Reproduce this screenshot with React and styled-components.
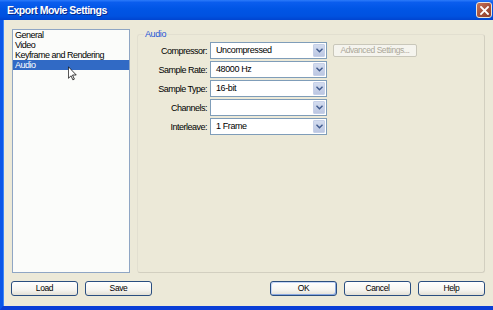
import React from 'react';
import styled, { createGlobalStyle } from 'styled-components';

const Global = createGlobalStyle`
  html, body { margin: 0; padding: 0; background: #ECE9D8; }
  body {
    width: 493px; height: 310px; overflow: hidden;
    font-family: "Liberation Sans", Arial, sans-serif;
  }
  * { box-sizing: border-box; }
`;

const Window = styled.div`
  width: 493px;
  height: 310px;
  display: flex;
  flex-direction: column;
`;

const TitleBar = styled.div`
  height: 20px;
  flex: none;
  display: flex;
  align-items: center;
  justify-content: space-between;
  padding: 0 1px 0 7px;
  background: linear-gradient(#2C7BFA 0%, #0A5DEE 12%, #0055E5 45%, #0052E0 80%, #0044D0 100%);
`;

const Title = styled.div`
  color: #fff;
  font-weight: bold;
  font-size: 10.5px;
  letter-spacing: -0.5px;
  text-shadow: 1px 1px 0 #0A2B8C;
`;

const CloseButton = styled.div`
  width: 16px;
  height: 16px;
  border: 1px solid #E8E4DC;
  border-radius: 3px;
  background: linear-gradient(135deg, #C87458 0%, #A5503A 55%, #8C3F2C 100%);
  display: flex;
  align-items: center;
  justify-content: center;
`;

const Frame = styled.div`
  flex: 1;
  display: flex;
  flex-direction: column;
  background: #ECE9D8;
  border-left: 3px solid #0A56E8;
  border-bottom: 4px solid #0A3ED6;
  padding: 9px 8px 10px 8px;
  box-shadow: inset 1px 0 0 #3C86F8;
`;

const Main = styled.div`
  height: 244px;
  display: flex;
  gap: 7px;
`;

const List = styled.div`
  position: relative;
  margin-left: 1px;
  width: 118px;
  height: 244px;
  background: #FBFCFA;
  border: 1px solid #8FA6C4;
`;

const ListItem = styled.div`
  height: 10px;
  line-height: 10px;
  font-size: 9px;
  letter-spacing: -0.5px;
  padding-left: 2px;
  white-space: nowrap;
  color: ${p => (p.$selected ? '#fff' : '#000')};
  background: ${p => (p.$selected ? '#316AC5' : 'transparent')};
`;

const Cursor = styled.svg`
  position: absolute;
  left: 55px;
  top: 36px;
`;

const Group = styled.fieldset`
  margin: 0;
  width: 348px;
  height: 244px;
  padding: 0;
  border: 1px solid #E2DFD0;
  border-right-color: #D2CFC0;
  border-bottom-color: #D2CFC0;
  border-radius: 3px;
`;

const Legend = styled.legend`
  margin-left: 6px;
  padding: 0 1px;
  font-size: 9px;
  letter-spacing: -0.4px;
  line-height: 10px;
  color: #1E55D6;
`;

const Form = styled.div`
  display: flex;
  flex-direction: column;
  gap: 2px;
  padding-top: 3px;
`;

const Row = styled.div`
  display: flex;
  align-items: center;
  height: 17px;
`;

const Label = styled.div`
  width: 70px;
  padding-right: 1px;
  text-align: right;
  font-size: 9px;
  letter-spacing: -0.5px;
  color: #000;
  white-space: nowrap;
`;

const Select = styled.div`
  margin-left: 2px;
  width: 117px;
  height: 17px;
  display: flex;
  align-items: stretch;
  border: 1px solid #7F9DB9;
  background: #fff;
`;

const SelectValue = styled.div`
  flex: 1;
  padding-left: 5px;
  font-size: 9px;
  letter-spacing: -0.4px;
  line-height: 15px;
  color: #000;
  white-space: nowrap;
  overflow: hidden;
`;

const ArrowBox = styled.div`
  width: 12px;
  margin: 1px;
  border-radius: 1px;
  background: linear-gradient(#D3DCEF, #BCC7E2);
  border: 1px solid #C6D0E8;
  display: flex;
  align-items: center;
  justify-content: center;
`;

const DisabledButton = styled.div`
  margin-left: 6px;
  width: 84px;
  height: 13px;
  border: 1px solid #C9C7BA;
  border-radius: 2px;
  background: #F5F4EE;
  color: #ACA899;
  font-size: 8.5px;
  letter-spacing: -0.45px;
  line-height: 11px;
  text-align: center;
  white-space: nowrap;
`;

const ButtonRow = styled.div`
  margin-top: 8px;
  height: 15px;
  display: flex;
  justify-content: space-between;
`;

const ButtonGroup = styled.div`
  display: flex;
  gap: 7px;
`;

const Button = styled.div`
  width: 67px;
  height: 15px;
  border: 1px solid #2A4E80;
  border-radius: 3px;
  background: linear-gradient(#FFFFFF 0%, #F6F5F1 60%, #E3E0D6 100%);
  box-shadow: ${p => (p.$default ? 'inset -1px -1px 0 #8AA8E0, inset 1px 1px 0 #C6D6F6' : 'none')};
  font-size: 8.5px;
  letter-spacing: -0.4px;
  line-height: 13px;
  text-align: center;
  color: #000;
`;

const Chevron = () => (
  <svg width="7" height="5" viewBox="0 0 7 5">
    <path d="M0.5 0.8 L3.5 3.8 L6.5 0.8" fill="none" stroke="#3F5A8E" strokeWidth="1.4" />
  </svg>
);

const rows = [
  { label: 'Compressor:', value: 'Uncompressed', extra: true },
  { label: 'Sample Rate:', value: '48000 Hz' },
  { label: 'Sample Type:', value: '16-bit' },
  { label: 'Channels:', value: '' },
  { label: 'Interleave:', value: '1 Frame' },
];

const items = ['General', 'Video', 'Keyframe and Rendering', 'Audio'];

export default function App() {
  return (
    <>
      <Global />
      <Window>
        <TitleBar>
          <Title>Export Movie Settings</Title>
          <CloseButton>
            <svg width="9" height="9" viewBox="0 0 9 9">
              <path d="M1 1 L8 8 M8 1 L1 8" stroke="#fff" strokeWidth="1.8" strokeLinecap="square" />
            </svg>
          </CloseButton>
        </TitleBar>
        <Frame>
          <Main>
            <List>
              {items.map(it => (
                <ListItem key={it} $selected={it === 'Audio'}>{it}</ListItem>
              ))}
              <Cursor width="9" height="15" viewBox="0 0 12 19">
                <path d="M0.5 0.5 L0.5 16 L4 12.5 L6.5 18 L8.5 17 L6 11.5 L11 11.5 Z" fill="#fff" stroke="#000" strokeWidth="1" />
              </Cursor>
            </List>
            <Group>
              <Legend>Audio</Legend>
              <Form>
                {rows.map(r => (
                  <Row key={r.label}>
                    <Label>{r.label}</Label>
                    <Select>
                      <SelectValue>{r.value}</SelectValue>
                      <ArrowBox><Chevron /></ArrowBox>
                    </Select>
                    {r.extra && <DisabledButton>Advanced Settings...</DisabledButton>}
                  </Row>
                ))}
              </Form>
            </Group>
          </Main>
          <ButtonRow>
            <ButtonGroup>
              <Button>Load</Button>
              <Button>Save</Button>
            </ButtonGroup>
            <ButtonGroup>
              <Button $default>OK</Button>
              <Button>Cancel</Button>
              <Button>Help</Button>
            </ButtonGroup>
          </ButtonRow>
        </Frame>
      </Window>
    </>
  );
}
